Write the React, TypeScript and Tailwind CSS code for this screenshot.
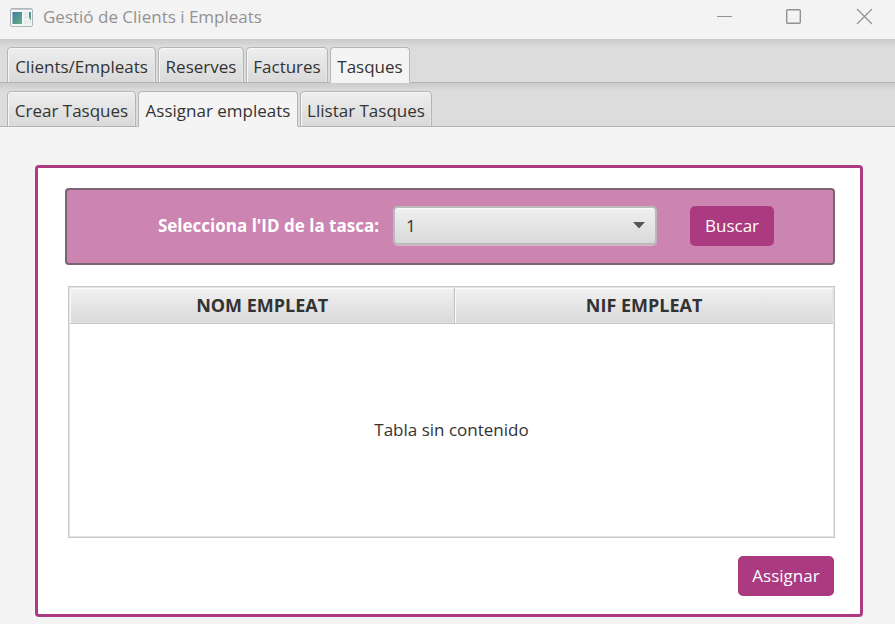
const mainTabs = [
  { label: 'Clients/Empleats', width: 'w-[149px]' },
  { label: 'Reserves', width: 'w-[86px]' },
  { label: 'Factures', width: 'w-[82px]' },
  { label: 'Tasques', width: 'w-[80px]' },
];

const taskTabs = [
  { label: 'Crear Tasques', width: 'w-[129px]' },
  { label: 'Assignar empleats', width: 'w-[160px]' },
  { label: 'Llistar Tasques', width: 'w-[132px]' },
];

type TabStripProps = {
  name: string;
  tabs: { label: string; width: string }[];
  selected: string;
};

function TabStrip({ name, tabs, selected }: TabStripProps) {
  return (
    <div className="h-11 bg-[linear-gradient(#cacaca,#dcdcdc_8px,#dcdcdc)] pt-2 shadow-[inset_0_-1px_#b5b5b5]">
      <div role="tablist" aria-label={name} className="flex gap-0.5 pl-[7px]">
        {tabs.map(({ label, width }) => {
          const active = label === selected;
          return (
            <button
              key={label}
              type="button"
              role="tab"
              aria-selected={active}
              className={`${width} h-9 whitespace-nowrap rounded-t border border-[#b5b5b5] pt-1 text-center leading-6 ${
                active
                  ? 'border-b-[#f4f4f4] bg-[#f4f4f4]'
                  : 'bg-[linear-gradient(#eeeeee,#d9d9d9)] shadow-[inset_1px_1px_#f7f7f7,inset_-1px_0_#e6e6e6]'
              }`}
            >
              {label}
            </button>
          );
        })}
      </div>
    </div>
  );
}

function TitleBar() {
  return (
    <header className="flex h-[39px] items-start justify-between bg-[#f3f3f3] pl-2.5 text-[#929292]">
      <div className="flex items-center gap-2.5 pt-1">
        <svg width="23" height="19" viewBox="0 0 23 19" aria-hidden="true">
          <defs>
            <linearGradient id="pane" x1="0" y1="0" x2="1" y2="1">
              <stop offset="0" stopColor="#4278a4" />
              <stop offset="1" stopColor="#62b47e" />
            </linearGradient>
          </defs>
          <rect x=".5" y=".5" width="22" height="18" rx="1.5" fill="#f3f6f7" stroke="#b0b6bb" />
          <path d="M1 1.5h21" stroke="#c5cbd0" />
          <rect x="2.5" y="4" width="9.5" height="12" fill="url(#pane)" />
          <path d="M14 4h4v7h-4zM14 12h4v4h-4zM19 12h2v4h-2z" fill="#e8eae9" />
          <path d="M19 4h2v8h-1l-1-3z" fill="url(#pane)" />
        </svg>
        <h1 className="leading-[26px]">Gestió de Clients i Empleats</h1>
      </div>
      <div className="flex gap-[39px] pr-[15px]">
        <button type="button" aria-label="Minimitza" className="flex h-[33px] w-[31px] items-center justify-center">
          <svg width="17" height="17" viewBox="0 0 17 17" stroke="currentColor"><path d="M1 8.5h15" /></svg>
        </button>
        <button type="button" aria-label="Maximitza" className="flex h-[33px] w-[31px] items-center justify-center">
          <svg width="17" height="17" viewBox="0 0 17 17" fill="none" stroke="currentColor" strokeWidth="1.4"><rect x=".7" y="1.7" width="13.6" height="13.6" rx="1" /></svg>
        </button>
        <button type="button" aria-label="Tanca" className="flex h-[33px] w-[31px] items-center justify-center">
          <svg width="17" height="17" viewBox="0 0 17 17" stroke="currentColor" strokeWidth="1.3"><path d="M1 1l15 15M16 1L1 16" /></svg>
        </button>
      </div>
    </header>
  );
}

export default function App() {
  return (
    <div className="min-h-screen bg-[#f4f4f4] font-['Open_Sans','Noto_Sans',sans-serif] text-[17px] text-[#333333]">
      <TitleBar />
      <TabStrip name="Seccions" tabs={mainTabs} selected="Tasques" />
      <TabStrip name="Tasques" tabs={taskTabs} selected="Assignar empleats" />
      <main className="pt-[38px] pr-8 pb-[7px] pl-[35px]">
        <section className="rounded border-3 border-[#ae3b82] bg-white pt-5 pr-[25px] pb-[18px] pl-[27px]">
          <form className="flex h-[77px] items-center justify-center rounded border-2 border-[#7b6473] bg-[#cc85b1] pr-[58px] pb-0.5 pl-[90px]">
            <label htmlFor="task-id" className="mr-3.5 whitespace-nowrap font-bold text-white">
              Selecciona l'ID de la tasca:
            </label>
            <div className="relative w-[264px]">
              <select
                id="task-id"
                className="block h-[39px] w-full appearance-none rounded-[5px] border-2 border-[#bababa] bg-[linear-gradient(#f0f0f0,#d9d9d9)] pl-[11px] shadow-[inset_0_1px_#fafafa,0_1px_#dfb5cf]"
              >
                <option>1</option>
              </select>
              <svg className="pointer-events-none absolute top-4 right-3" width="12" height="7" viewBox="0 0 12 7" aria-hidden="true">
                <path d="M0 0h12L6 6.5z" fill="#555555" />
              </svg>
            </div>
            <button type="button" className="ml-[33px] h-10 w-[84px] rounded-[5px] bg-[#ab3a80] text-white">
              Buscar
            </button>
          </form>
          <div className="mt-[21px] ml-[3px] border border-[#c8c8c8] p-px shadow-[inset_0_0_0_1px_#e4e4e4]">
            <table className="w-full table-fixed border-separate border-spacing-0">
              <colgroup>
                <col className="w-[50.5%]" />
                <col />
              </colgroup>
              <thead>
                <tr className="h-9 text-[18px]">
                  <th scope="col" className="border-r border-b border-[#c4c4c4] bg-[linear-gradient(#f1f1f1,#d9d9d9)] p-0 font-bold shadow-[inset_1px_1px_#fafafa,inset_-1px_-1px_#e2e2e2]">NOM EMPLEAT</th>
                  <th scope="col" className="border-b border-[#c4c4c4] bg-[linear-gradient(#f1f1f1,#d9d9d9)] p-0 font-bold shadow-[inset_1px_1px_#fafafa,inset_-1px_-1px_#e2e2e2]">NIF EMPLEAT</th>
                </tr>
              </thead>
              <tbody>
                <tr>
                  <td colSpan={2} className="h-[212px] p-0 text-center">Tabla sin contenido</td>
                </tr>
              </tbody>
            </table>
          </div>
          <div className="mt-[18px] flex justify-end pr-px">
            <button type="button" className="h-10 w-24 rounded-[5px] bg-[#ab3a80] text-white">
              Assignar
            </button>
          </div>
        </section>
      </main>
    </div>
  );
}
